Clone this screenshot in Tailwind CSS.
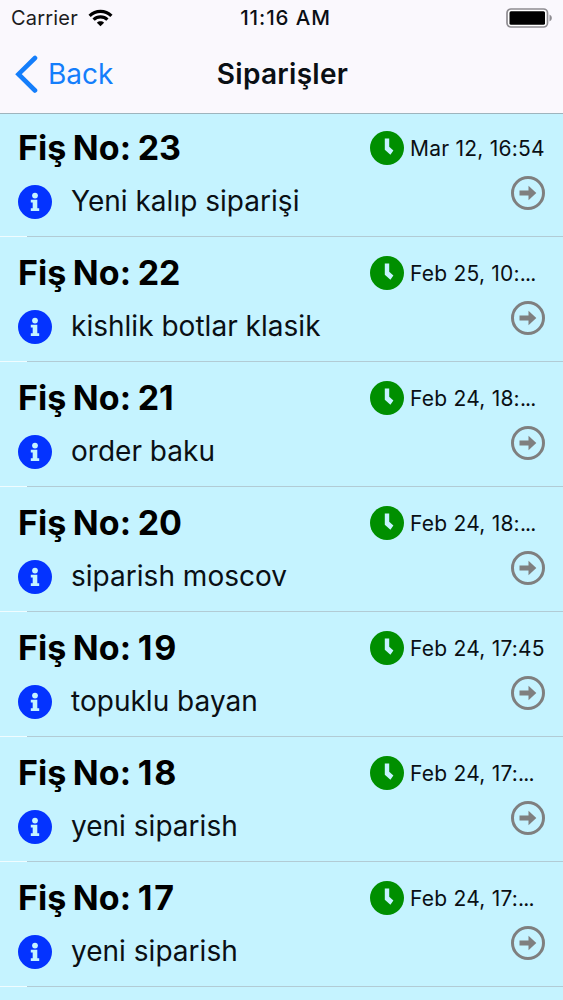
<!DOCTYPE html>
<html lang="tr">
<head>
<meta charset="utf-8">
<title>Siparişler</title>
<script src="https://cdn.jsdelivr.net/npm/@tailwindcss/browser@4"></script>
</head>
<body class="w-[563px] h-[1000px] overflow-hidden bg-[#c5f3ff] font-['Inter','Liberation_Sans',sans-serif] text-[#0a0f14]">
<header class="relative z-10 h-[114px] border-b border-[#9eb4bd] bg-[#faf8fd]">
  <div class="grid h-[37px] grid-cols-3 items-center pl-[11px] pr-[11px] text-[20px]">
    <div class="-mt-px flex items-center gap-[10px] text-[#1c1c1e]">
      <span class="tracking-[0.2px]">Carrier</span>
      <svg class="-mt-px" width="25" height="18" viewBox="0 0 26 19" fill="none" stroke="#000" stroke-width="3.4"><path d="M1.5 7.2C8 .9 18 .9 24.5 7.2M5.7 11.3C9.8 7.3 16.2 7.3 20.3 11.3"/><path d="M13 18.2 9.2 14.4C11.3 12.5 14.7 12.5 16.8 14.4Z" fill="#000" stroke="none"/></svg>
    </div>
    <span class="justify-self-center whitespace-nowrap pl-[8px] text-[20.5px] font-medium tracking-[0.9px]">11:16 AM</span>
    <svg class="-mt-px justify-self-end" width="46" height="20" viewBox="0 0 46 20"><rect x="1" y="1" width="40.500" height="18" rx="4" fill="#fff" stroke="#8e8c91" stroke-width="1.700"/><rect x="3.500" y="3.300" width="35.500" height="13.400" rx="1.500"/><path d="M43.500 6.500q2.400 1 2.400 3.500t-2.400 3.500z" fill="#8e8c91"/></svg>
  </div>
  <div class="grid h-[74px] grid-cols-3 items-center pl-[15px] pr-[13px]">
    <div class="flex items-center gap-[10px] text-[28px] text-[#147efb]">
      <svg width="23" height="38" viewBox="0 0 23 38" fill="none" stroke="currentColor" stroke-width="4.600" stroke-linecap="round"><path d="M20 3 3.500 19.200 20 35.500"/></svg>
      <span>Back</span>
    </div>
    <h1 class="justify-self-center text-[28px] font-semibold tracking-[0.3px]">Siparişler</h1>
  </div>
</header>
<main id="orders" class="-mt-[2px]"></main>
<template id="order">
  <section class="h-[125px]">
    <div class="flex h-[124px] justify-between pl-[18px] pr-[18px]">
      <div class="pt-[11px]">
        <h2 class="h-[50px] whitespace-nowrap text-[34px] leading-[50px] font-bold tracking-[0.05px] [word-spacing:-1.6px] text-black">Fiş No: <span data-no></span></h2>
        <div class="flex h-[57px] items-center">
          <svg width="34" height="34" viewBox="0 0 34 34"><circle cx="17" cy="17" r="17" fill="#0433ff"/><circle cx="17" cy="10.600" r="2.900" fill="#c5f3ff"/><path d="M12.800 14.800h6.500v8.400h1.900v2.700h-8.400v-2.700h1.900v-5.700h-1.900z" fill="#c5f3ff"/></svg>
          <span class="ml-[19px] whitespace-nowrap pb-[2px] text-[28px] tracking-[0.02px]" data-name></span>
        </div>
      </div>
      <div class="flex w-[175px] flex-col pt-[11px]">
        <div class="flex h-[50px] items-center gap-[6px]">
          <svg class="shrink-0" width="34" height="34" viewBox="0 0 34 34"><circle cx="17" cy="17" r="17" fill="#008f00"/><path d="M14.800 7.500h4.400v8.200l4.200 3.700-3 4.300-5.600-5z" fill="#c5f3ff"/></svg>
          <span class="whitespace-nowrap pt-[2px] text-[21px] tracking-[0.22px]"><span data-date></span><span class="tracking-[-0.8px]" data-more></span></span>
        </div>
        <svg class="mt-[3px] self-end" width="34" height="34" viewBox="0 0 34 34"><circle cx="17" cy="17" r="15.500" fill="none" stroke="#7f7f7f" stroke-width="3"/><path d="M8.500 14.500h9V9.800L25.300 17l-7.800 7.200v-4.700h-9z" fill="#7f7f7f"/></svg>
      </div>
    </div>
    <div class="flex h-px"><i class="w-[27px] bg-[#f0fcff]"></i><i class="flex-1 bg-[#b2cbd5]"></i></div>
  </section>
</template>
<script>
const orders = [
  ["23", "Yeni kalıp siparişi", "Mar 12, 16:54", ""],
  ["22", "kishlik botlar klasik", "Feb 25, 10:", "..."],
  ["21", "order baku", "Feb 24, 18:", "..."],
  ["20", "siparish moscov", "Feb 24, 18:", "..."],
  ["19", "topuklu bayan", "Feb 24, 17:45", ""],
  ["18", "yeni siparish", "Feb 24, 17:", "..."],
  ["17", "yeni siparish", "Feb 24, 17:", "..."],
];
for (const [no, name, date, more] of orders) {
  const row = document.getElementById("order").content.cloneNode(true);
  const number = row.querySelector("[data-no]");
  number.textContent = no;
  if (no.startsWith("1")) number.className = "tracking-[2px]";
  row.querySelector("[data-name]").textContent = name;
  row.querySelector("[data-date]").textContent = date;
  row.querySelector("[data-more]").textContent = more;
  document.getElementById("orders").append(row);
}
</script>
</body>
</html>
